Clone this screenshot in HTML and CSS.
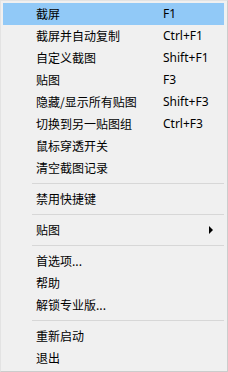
FILE: index.html
```html
<!DOCTYPE html>
<html>
<head>
<meta charset="utf-8">
<link rel="stylesheet" href="styles.css">
</head>
<body>
<div class="menu">
  <div class="item active"><span class="label">截屏</span><span class="key">F1</span></div>
  <div class="item"><span class="label">截屏并自动复制</span><span class="key">Ctrl+F1</span></div>
  <div class="item"><span class="label">自定义截图</span><span class="key">Shift+F1</span></div>
  <div class="item"><span class="label">贴图</span><span class="key">F3</span></div>
  <div class="item"><span class="label">隐藏/显示所有贴图</span><span class="key">Shift+F3</span></div>
  <div class="item"><span class="label">切换到另一贴图组</span><span class="key">Ctrl+F3</span></div>
  <div class="item"><span class="label">鼠标穿透开关</span><span class="key"></span></div>
  <div class="item"><span class="label">清空截图记录</span><span class="key"></span></div>
  <div class="sep"></div>
  <div class="item"><span class="label">禁用快捷键</span><span class="key"></span></div>
  <div class="sep"></div>
  <div class="item"><span class="label">贴图</span><span class="key"></span><span class="arrow"></span></div>
  <div class="sep"></div>
  <div class="item"><span class="label">首选项...</span><span class="key"></span></div>
  <div class="item"><span class="label">帮助</span><span class="key"></span></div>
  <div class="item"><span class="label">解锁专业版...</span><span class="key"></span></div>
  <div class="sep"></div>
  <div class="item"><span class="label">重新启动</span><span class="key"></span></div>
  <div class="item"><span class="label">退出</span><span class="key"></span></div>
</div>
</body>
</html>
```

FILE: styles.css
```css
html, body {
  margin: 0;
  padding: 0;
  background: #f0f0f0;
}
.menu {
  box-sizing: border-box;
  width: 228px;
  height: 372px;
  background: #f0f0f0;
  border: 1px solid #cccccc;
  border-top-color: #e3e3e3;
  border-left-color: #e3e3e3;
  padding: 2px 3px 2px 2px;
  font-family: "Noto Sans CJK SC", "Noto Sans", sans-serif;
  font-size: 12px;
  color: #000;
}
.item {
  display: grid;
  grid-template-columns: 127px 1fr 15px;
  align-items: center;
  height: 22px;
  padding-left: 33px;
}
.item.active {
  background: #91c9f7;
}
.label {
  white-space: nowrap;
  line-height: 22px;
}
.key {
  font-family: "Noto Sans", "Liberation Sans", sans-serif;
  line-height: 22px;
  white-space: nowrap;
}
.arrow {
  width: 0;
  height: 0;
  border-top: 4px solid transparent;
  border-bottom: 4px solid transparent;
  border-left: 4px solid #000;
  justify-self: start;
}
.sep {
  height: 1px;
  background: #d7d7d7;
  margin: 4px 0 4px 29px;
}
```
